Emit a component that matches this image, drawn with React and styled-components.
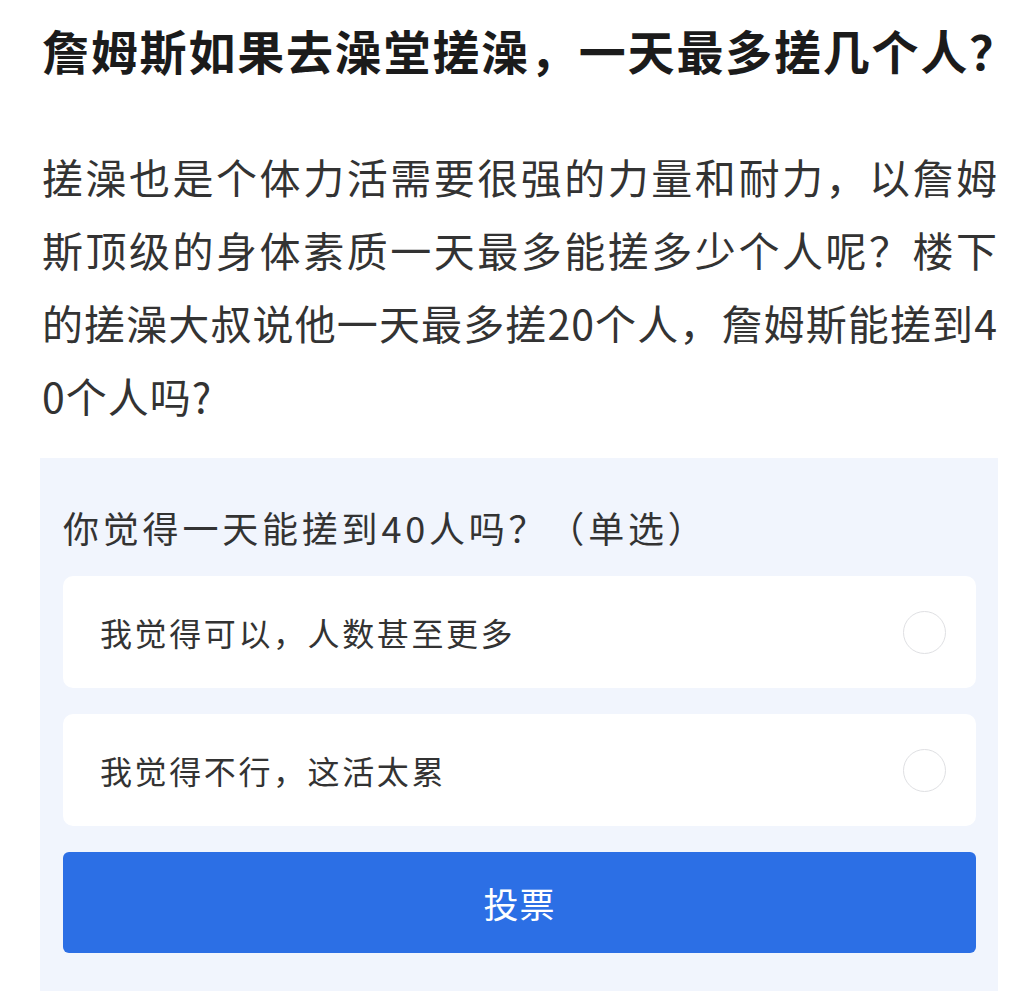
import React, {useState} from 'react'
import styled, {createGlobalStyle} from 'styled-components'

const GlobalStyle = createGlobalStyle`
    html, body {
        margin: 0;
        padding: 0;
        background: #fff;
    }
    body {
        font-family: "Noto Sans CJK SC", "Noto Sans", sans-serif;
        color: #333;
    }
`

const options = [
    {id: 'yes', label: '我觉得可以，人数甚至更多'},
    {id: 'no', label: '我觉得不行，这活太累'}
]

export default function App() {
    const [picked, setPicked] = useState(null)

    return (
        <Page>
            <GlobalStyle/>
            <Title>詹姆斯如果去澡堂搓澡，一天最多搓几个人？</Title>
            <Body>
                搓澡也是个体力活需要很强的力量和耐力，以詹姆斯顶级的身体素质一天最多能搓多少个人呢？楼下的搓澡大叔说他一天最多搓20个人，詹姆斯能搓到40个人吗?
            </Body>
            <Poll>
                <Question>你觉得一天能搓到40人吗？（单选）</Question>
                <Options>
                    {options.map(o => (
                        <Option key={o.id} onClick={() => setPicked(o.id)}>
                            <OptionLabel>{o.label}</OptionLabel>
                            <Radio checked={picked == o.id}/>
                        </Option>
                    ))}
                </Options>
                <VoteButton>投票</VoteButton>
            </Poll>
        </Page>
    )
}

const Page = styled.div`
    width: 1024px;
    padding: 18px 26px 11px 40px;
    box-sizing: border-box;
`

const Title = styled.h1`
    margin: 0 0 58px 2px;
    font-size: 47px;
    line-height: 64px;
    font-weight: 700;
    letter-spacing: 1.8px;
    color: #1b1b1b;
    white-space: nowrap;
`

const Body = styled.p`
    margin: 0 0 26px 2px;
    font-size: 41px;
    line-height: 73px;
    letter-spacing: 1px;
    color: #333;
    text-align: justify;
    word-break: break-all;
`

const Poll = styled.div`
    width: 958px;
    background: #f1f5fd;
    padding: 44px 22px 38px 23px;
    box-sizing: border-box;
`

const Question = styled.div`
    font-size: 36px;
    line-height: 50px;
    letter-spacing: 3.8px;
    color: #333;
    margin-bottom: 24px;
`

const Options = styled.div`
    display: flex;
    flex-direction: column;
    gap: 26px;
`

const Option = styled.div`
    height: 112px;
    background: #fff;
    border-radius: 10px;
    display: flex;
    align-items: center;
    justify-content: space-between;
    padding: 0 30px 0 37px;
    cursor: pointer;
`

const OptionLabel = styled.span`
    font-size: 32px;
    letter-spacing: 2.6px;
    color: #333;
`

const Radio = styled.span`
    width: 43px;
    height: 43px;
    border-radius: 50%;
    box-sizing: border-box;
    border: ${p => p.checked ? '12px solid #2c6fe5' : '1.5px solid #dfe0e3'};
    background: #fff;
`

const VoteButton = styled.button`
    display: block;
    width: 100%;
    height: 101px;
    margin-top: 26px;
    border: 0;
    border-radius: 6px;
    background: #2c6fe5;
    color: #fff;
    font-family: "Noto Sans CJK SC", sans-serif;
    font-size: 35px;
    letter-spacing: 1px;
    cursor: pointer;
`
